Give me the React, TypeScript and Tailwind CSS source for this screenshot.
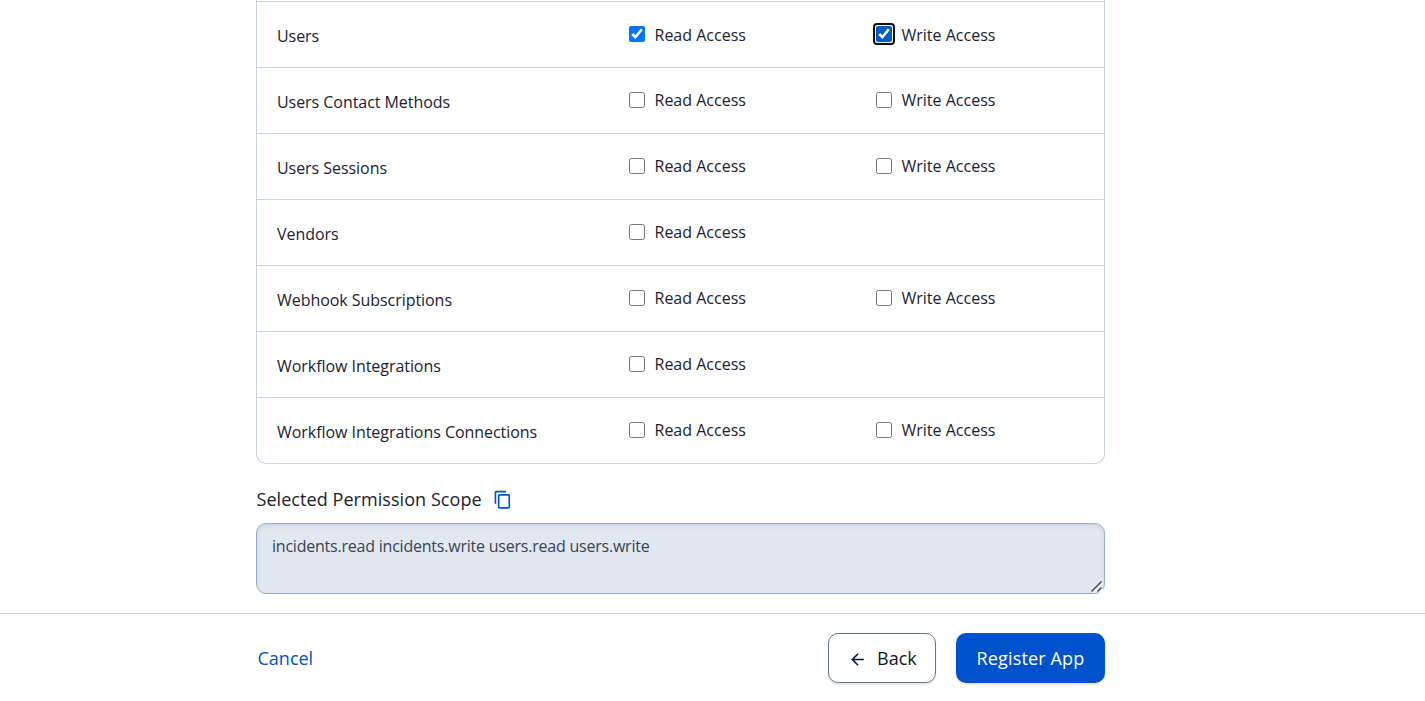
const permissions = [
  { name: "Users", write: true, checked: true },
  { name: "Users Contact Methods", write: true },
  { name: "Users Sessions", write: true },
  { name: "Vendors", write: false },
  { name: "Webhook Subscriptions", write: true },
  { name: "Workflow Integrations", write: false },
  { name: "Workflow Integrations Connections", write: true },
];

function Access({ label, checked = false, focused = false }: { label: string; checked?: boolean; focused?: boolean }) {
  return (
    <label className="flex items-center self-start">
      <span className={focused ? "-m-[3px] flex rounded-[4px] border-2 border-[#101010] p-px" : "flex"}>
        <input
          type="checkbox"
          defaultChecked={checked}
          className={focused ? "m-0 size-4 shrink-0 accent-[#005cc8]" : "m-0 size-4 shrink-0"}
        />
      </span>
      <span className={(checked ? "pt-px -mb-px " : "") + "ml-[9.5px] leading-6 whitespace-nowrap"}>{label}</span>
    </label>
  );
}

export default function App() {
  return (
    <div className="h-[701px] overflow-hidden bg-white font-['Open_Sans','Noto_Sans',sans-serif] text-[16px] text-[#1b2330]">
      <main className="ml-64 w-[849px]">
        <div className="rounded-b-[10px] border border-t-0 border-[#c9d3df]">
          <div className="h-[2px] border-b border-[#c9d3df]" />
          {permissions.map((p) => (
            <div
              key={p.name}
              className="grid h-[66px] grid-cols-[352px_247px_1fr] border-b border-[#c9d3df] pt-[20px] pl-5 last:h-[65px] last:border-b-0"
            >
              <span className="pt-[2px] leading-6 tracking-[-0.05px] whitespace-nowrap">{p.name}</span>
              <Access label="Read Access" checked={p.checked} />
              {p.write && <Access label="Write Access" checked={p.checked} focused={p.checked} />}
            </div>
          ))}
        </div>
        <div className="mt-[21px] flex h-7 items-center text-[18px]">
          <h2 className="pl-[0.5px] tracking-[0.06px] whitespace-nowrap">Selected Permission Scope</h2>
          <svg className="mt-px ml-[11px] size-[19.5px]" viewBox="0 0 24 24" fill="#0052cc">
            <path d="M16 1H4c-1.100 0-2 .9-2 2v14h2V3h12V1zm3 4H8c-1.100 0-2 .9-2 2v14c0 1.100.9 2 2 2h11c1.100 0 2-.9 2-2V7c0-1.100-.9-2-2-2zm0 16H8V7h11v14z" />
          </svg>
        </div>
        <div className="relative mt-[10px]">
          <textarea
            readOnly
            value="incidents.read incidents.write users.read users.write"
            className="block h-[71px] w-full resize-none rounded-[10px] border border-[#9cabc0] bg-[#e1e8f0] px-[15px] py-[10px] leading-6 tracking-[-0.22px] text-[#3b4350] shadow-[inset_0_2px_4px_rgba(30,50,80,0.1)] outline-none"
          />
          <svg className="absolute right-px bottom-px size-[13px]" viewBox="0 0 13 13" fill="none" strokeWidth="1.500">
            <path d="M1 12L11 2M7 12l4-4" stroke="#fff" transform="translate(1 1)" />
            <path d="M0.500 11.500L10.500 1.500M6.500 11.500l4-4" stroke="#444b55" />
          </svg>
        </div>
      </main>
      <footer className="mt-[19px] border-t border-[#c9d3df] pt-[19px]">
        <div className="ml-64 flex h-[50px] w-[849px] items-center text-[18px]">
          <button className="pl-[1.5px] text-[#0052cc]">Cancel</button>
          <button className="ml-auto flex h-[50px] w-[108px] items-center rounded-[10px] border border-[#64748b] pl-[19px] text-[#111827] shadow-[0_2px_2px_rgba(0,0,0,0.1)]">
            <svg className="mt-[2px] size-[19px]" viewBox="0 0 24 24" fill="currentColor">
              <path d="M20 11H7.830l5.590-5.590L12 4l-8 8 8 8 1.410-1.410L7.830 13H20v-2z" />
            </svg>
            <span className="ml-[10px]">Back</span>
          </button>
          <button className="ml-5 h-[50px] w-[149px] rounded-[10px] bg-[#0052cc] text-white shadow-[0_2px_2px_rgba(0,0,0,0.1)]">
            <span className="tracking-[0.15px] whitespace-nowrap">Register App</span>
          </button>
        </div>
      </footer>
    </div>
  );
}
